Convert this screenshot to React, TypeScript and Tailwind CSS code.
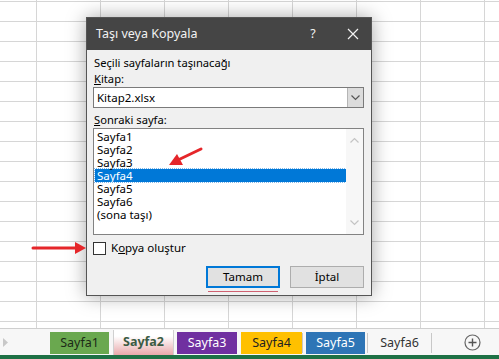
import React from 'react';

const font = { fontFamily: '"Noto Sans", "Open Sans", sans-serif' };

const sheets = ['Sayfa1', 'Sayfa2', 'Sayfa3', 'Sayfa4', 'Sayfa5', 'Sayfa6', '(sona taşı)'];

const Chevron = ({ up, color }: { up?: boolean; color: string }) => (
  <svg width="9" height="6" viewBox="0 0 9 6">
    <path d={up ? 'M0.5 5.5 L4.5 1.5 L8.5 5.5' : 'M0.5 0.5 L4.5 4.5 L8.5 0.5'} fill="none" stroke={color} strokeWidth="1.2" />
  </svg>
);

const Tab = ({ label, className }: { label: string; className: string }) => (
  <div className={`h-[22px] mt-[3px] flex items-center justify-center text-[12.5px] ${className}`}>{label}</div>
);

export default function App() {
  return (
    <div className="relative w-[499px] h-[359px] overflow-hidden bg-white flex flex-col" style={font}>
      {/* sheet grid */}
      <div className="h-[328px] shrink-0 bg-white bg-[linear-gradient(to_right,#d6d6d6_1px,transparent_1px),linear-gradient(to_bottom,#d6d6d6_1px,transparent_1px)] bg-size-[64px_20px] bg-position-[36px_1px]" />

      {/* tab bar */}
      <div className="h-[27px] shrink-0 border-t border-[#cfcfcf] bg-[#f7f7f7] flex items-start">
        <div className="w-[50px] h-full flex items-center pl-[3px]">
          <svg width="5" height="9" viewBox="0 0 5 9">
            <path d="M0 0 L5 4.5 L0 9 Z" fill="#c8c8c8" />
          </svg>
        </div>
        <Tab label="Sayfa1" className="w-[59px] bg-[#6aa84f] text-[#1c2a17]" />
        <div className="w-[4px]" />
        <div className="w-[61px] h-[25px] mt-[1px] flex items-center justify-center text-[12.5px] font-bold text-[#3b5b43] bg-[linear-gradient(to_bottom,#ffffff_25%,#e8a8aa)] border-x border-[#d0d0d0]">
          Sayfa2
        </div>
        <div className="w-[3px]" />
        <Tab label="Sayfa3" className="w-[60px] bg-[#7030a0] text-white" />
        <div className="w-[4px]" />
        <Tab label="Sayfa4" className="w-[61px] bg-[#ffc000] text-[#222]" />
        <div className="w-[1px] h-[20px] mt-[4px] bg-[#c8c8c8]" />
        <div className="w-[3px]" />
        <Tab label="Sayfa5" className="w-[59px] bg-[#2e75b6] text-white" />
        <div className="w-[2px]" />
        <div className="w-[1px] h-[20px] mt-[4px] bg-[#c8c8c8]" />
        <Tab label="Sayfa6" className="w-[63px] text-[#333]" />
        <div className="w-[1px] h-[20px] mt-[4px] bg-[#c8c8c8]" />
        <div className="flex-1 h-full flex items-center justify-start pl-[32px]">
          <svg width="17" height="17" viewBox="0 0 17 17">
            <circle cx="8.5" cy="8.5" r="7.5" fill="none" stroke="#666" strokeWidth="1.2" />
            <path d="M8.5 4.5 V12.5 M4.5 8.5 H12.5" stroke="#555" strokeWidth="1.4" />
          </svg>
        </div>
      </div>
      <div className="h-[4px] shrink-0 bg-[#1e7145]" />

      {/* dialog */}
      <div className="absolute left-[86px] top-[17px] w-[286px] h-[279px] border border-[#555] bg-[#f0f0f0] shadow-[0_0_18px_rgba(0,0,0,0.35)] flex flex-col text-[11.2px] text-black">
        <div className="h-[32px] shrink-0 bg-[#454545] text-[#f2f2f2] flex items-center pl-[9px] text-[12.5px]">
          <span className="flex-1">Taşı veya Kopyala</span>
          <span className="w-[20px] text-center mr-[24px]">?</span>
          <svg width="12" height="12" viewBox="0 0 12 12" className="mr-[12px]">
            <path d="M1 1 L11 11 M11 1 L1 11" stroke="#f2f2f2" strokeWidth="1.2" />
          </svg>
        </div>
        <div className="flex flex-col pl-[6px] pr-[7px] pt-[5px]">
          <div className="leading-[16px] pl-[1px]">Seçili sayfaların taşınacağı</div>
          <div className="leading-[16px] pl-[1px]">
            <span className="underline">K</span>itap:
          </div>
          <div className="h-[21px] border border-[#7a7a7a] bg-white flex items-center">
            <span className="flex-1 pl-[3px] text-[11.5px]">Kitap2.xlsx</span>
            <div className="w-[16px] h-full bg-[#dcdcdc] border-l border-[#b5b5b5] flex items-center justify-center">
              <Chevron color="#555" />
            </div>
          </div>
          <div className="leading-[16px] mt-[4px] pl-[1px]">
            <span className="underline">S</span>onraki sayfa:
          </div>
          <div className="h-[107px] border border-[#828282] bg-white flex">
            <div className="flex-1 pt-[1px] pl-[1px] text-[11.5px]">
              {sheets.map((s) => (
                <div
                  key={s}
                  className={`h-[13px] leading-[13px] pl-[2px] ${s === 'Sayfa4' ? 'bg-[#0078d7] text-white outline-dotted outline-1 outline-[#7fb8ea]' : ''}`}
                >
                  {s}
                </div>
              ))}
            </div>
            <div className="w-[17px] bg-[#f7f7f7] flex flex-col items-center justify-between py-[8px]">
              <Chevron up color="#c4c4c4" />
              <Chevron color="#c4c4c4" />
            </div>
          </div>
          <div className="flex items-center h-[14px] mt-[6px]">
            <div className="w-[13px] h-[13px] border border-[#333] bg-white" />
            <span className="ml-[5px] text-[11.5px]">
              K<span className="underline">o</span>pya oluştur
            </span>
          </div>
          <div className="flex justify-end gap-[10px] mt-[11px] text-[11.5px]">
            <div className="relative">
              <div className="w-[74px] h-[22px] border-2 border-[#0078d7] bg-[#e1e1e1] flex items-center justify-center">
                Tamam
              </div>
              <div className="absolute left-[2px] right-[2px] top-[25px] h-[1px] bg-[#d06070]" />
            </div>
            <div className="w-[74px] h-[22px] border border-[#adadad] bg-[#e1e1e1] flex items-center justify-center">
              İptal
            </div>
          </div>
        </div>
      </div>

      {/* red annotation arrows */}
      <svg className="absolute left-0 top-0 pointer-events-none" width="499" height="359" viewBox="0 0 499 359">
        <path d="M201 149 L178 160" stroke="#e5262a" strokeWidth="3" strokeLinecap="round" />
        <path d="M169 165 L177 154 L183 165 Z" fill="#e5262a" />
        <path d="M33 248 L76 248" stroke="#e5262a" strokeWidth="3" strokeLinecap="round" />
        <path d="M86 248 L75 242 L75 254 Z" fill="#e5262a" />
      </svg>
    </div>
  );
}
